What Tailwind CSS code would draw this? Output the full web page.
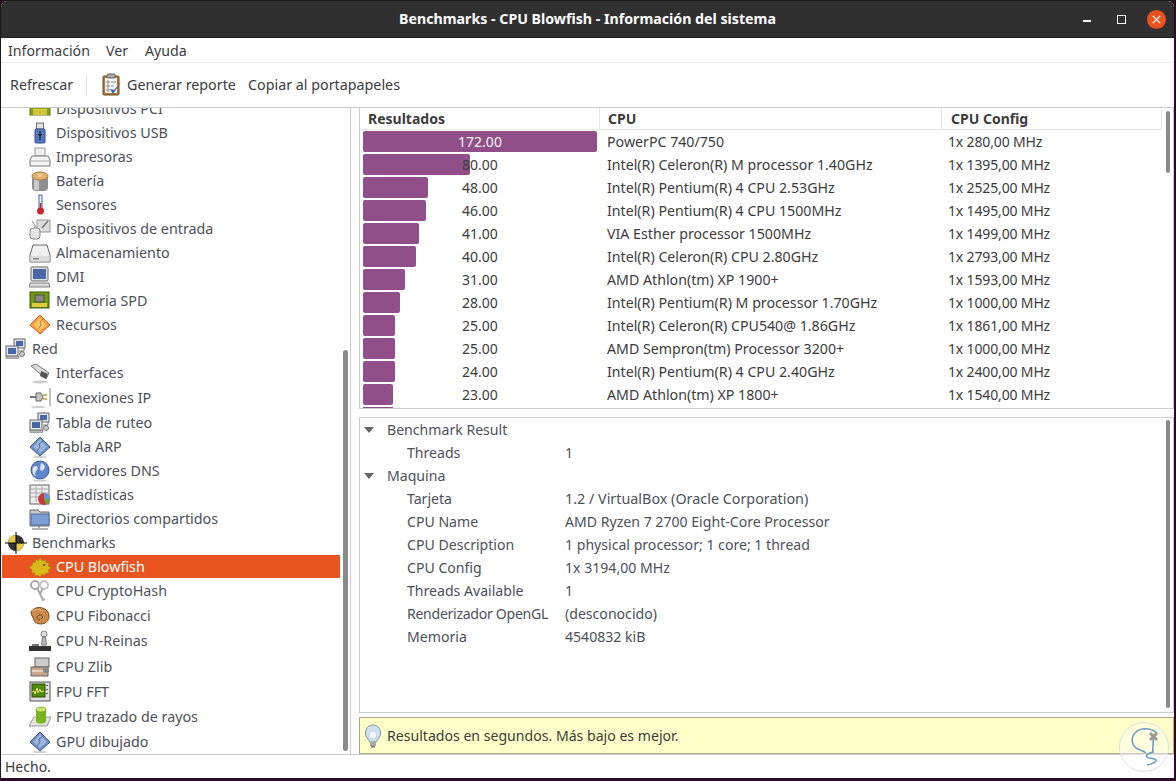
<!DOCTYPE html>
<html lang="es"><head><meta charset="utf-8"><title>Benchmarks</title>
<script src="https://cdn.jsdelivr.net/npm/@tailwindcss/browser@4"></script></head>
<body class="m-0 bg-[#2c0a26]">
<svg width="0" height="0" class="absolute">
<defs>
<symbol id="net" viewBox="0 0 22 22"><rect x="9" y="1" width="11" height="9" fill="#dfe3e8" stroke="#666"/><rect x="11" y="3" width="7" height="5" fill="#4a68a8"/><rect x="1" y="8" width="12" height="10" fill="#e3e6ea" stroke="#666"/><rect x="3" y="10" width="8" height="6" fill="#4a68a8"/><rect x="1" y="18.5" width="13" height="2" fill="#bbb" stroke="#777" stroke-width=".6"/><circle cx="17" cy="16" r="2.500" fill="#ccc" stroke="#777"/><path d="M14 13h5v-3" fill="none" stroke="#777"/></symbol>
<symbol id="dia" viewBox="0 0 22 22"><path d="M11 1l10 10-10 9L1 11z" fill="#6f8fc4" stroke="#3d5a8c"/><path d="M11 3l7 8-7 6-7-6z" fill="#9bb4dc"/><path d="M8 15l3-4-1-3 4-3" fill="none" stroke="#3d5a8c" stroke-width=".8"/><ellipse cx="11" cy="21" rx="7" ry="1" fill="#ccc"/></symbol>
</defs>
</svg>
<div class="relative w-[1176px] h-[781px] overflow-hidden bg-[#2c0a26] font-['Noto_Sans',sans-serif] text-[14px]">
<div class="absolute left-0 top-0 bottom-0 w-[1px] bg-[#1a1a1a]"></div>
<div class="absolute left-0 right-0 top-0 h-[1px] bg-[#1a1a1a]"></div>
<div class="ml-[1px] mt-[1px] w-[1173px] h-[777px] flex flex-col bg-white overflow-hidden rounded-t-[6px]">

<!-- title bar -->
<div class="relative h-[37px] shrink-0 bg-[#303030] border-b border-[#1e1e1e] flex items-center justify-center text-white font-bold text-[14.2px]">
<span class="mb-[1px]">Benchmarks - CPU Blowfish - Información del sistema</span>
<div class="absolute right-[8px] top-0 h-[36px] flex items-center">
<div class="w-[8px] h-[2px] bg-white mt-[4px]"></div>
<div class="w-[9px] h-[9px] border border-white ml-[26px]"></div>
<div class="w-[19px] h-[19px] rounded-full bg-[#e95420] flex items-center justify-center ml-[21px]">
<svg width="9" height="9" viewBox="0 0 9 9"><path d="M.8.8l7.4 7.4M8.2.8L.8 8.2" stroke="#fff" stroke-width="1.2"/></svg></div>
</div>
</div>

<!-- menu -->
<div class="h-[25px] shrink-0 border-b border-[#ececec] flex items-center text-[#3c3c3c] text-[14.2px] pt-[1px]">
<span class="w-[105px] pl-[7px] shrink-0">Información</span><span class="w-[39px] shrink-0">Ver</span><span>Ayuda</span>
</div>

<!-- toolbar -->
<div class="h-[44px] shrink-0 flex items-center text-[#3c3c3c] text-[14.3px]">
<span class="w-[85px] pl-[9px] shrink-0">Refrescar</span>
<div class="w-[1px] h-[21px] bg-[#e2e2e2] shrink-0"></div>
<svg class="ml-[14px] shrink-0" width="22" height="24" viewBox="0 0 22 24"><rect x="2" y="3" width="16" height="19" rx="1" fill="#b5793f" stroke="#6e4a22"/><rect x="4" y="5" width="12" height="15" fill="#f2f2f0"/><rect x="6" y="1" width="8" height="4" rx="1" fill="#aaa" stroke="#666"/><path d="M6 8h2v2H6zM6 12h2v2H6zM6 16h2v2H6z" fill="none" stroke="#777" stroke-width=".7"/><path d="M10 9h5M10 13h3" stroke="#999"/><path d="M9 16l3 5 8-12-7 8z" fill="#3a5fa5"/></svg>
<span class="ml-[4px] w-[121px] shrink-0">Generar reporte</span>
<span>Copiar al portapapeles</span>
</div>

<!-- main -->
<div class="h-[647px] shrink-0 flex border-t border-[#cdcdcd]">
<!-- sidebar -->
<div class="relative w-[350px] shrink-0 border-r border-[#cdcdcd] overflow-hidden text-[#4d5158] text-[14.3px]">
<div class="-mt-[11px]">
<div class="h-[24px] flex items-center pl-[28px]"><svg class="w-[22px] h-[22px] shrink-0" viewBox="0 0 22 22"><rect x="1" y="6" width="20" height="11" fill="#7fa51e" stroke="#56740e"/><rect x="4" y="11" width="14" height="6" fill="#e6d040"/><path d="M5 12v5M8 12v5M11 12v5M14 12v5M17 12v5" stroke="#9a8a1a" stroke-width=".6"/></svg><span class="ml-[5px]">Dispositivos PCI</span></div>

<div class="h-[24px] flex items-center pl-[28px]"><svg class="w-[22px] h-[22px] shrink-0" viewBox="0 0 22 22"><rect x="7.500" y="1" width="7" height="6" fill="#e2e2e2" stroke="#777"/><rect x="6" y="7" width="10" height="14" rx="1" fill="#5578c0" stroke="#34518c"/><path d="M11 9v9M9 12l2 2 2-2" stroke="#111" fill="none"/></svg><span class="ml-[5px]">Dispositivos USB</span></div>

<div class="h-[24px] flex items-center pl-[28px]"><svg class="w-[22px] h-[22px] shrink-0" viewBox="0 0 22 22"><rect x="6" y="2" width="10" height="8" fill="#eee" stroke="#999"/><path d="M3 10h16l2 4v6H1v-6z" fill="#f4f4f4" stroke="#777"/><path d="M2 15h18" stroke="#aaa"/></svg><span class="ml-[5px]">Impresoras</span></div>

<div class="h-[24px] flex items-center pl-[28px]"><svg class="w-[22px] h-[22px] shrink-0" viewBox="0 0 22 22"><rect x="3" y="5" width="16" height="16" rx="4" fill="#8f8f8f"/><rect x="5" y="8" width="5" height="12" fill="#c9c9c9"/><ellipse cx="11" cy="6" rx="8" ry="4" fill="#e2b36e" stroke="#a87b3a"/><circle cx="11" cy="5" r="2" fill="#f0cf9a"/></svg><span class="ml-[5px]">Batería</span></div>

<div class="h-[24px] flex items-center pl-[28px]"><svg class="w-[22px] h-[22px] shrink-0" viewBox="0 0 22 22"><rect x="10" y="1" width="3" height="14" fill="#e8ecf4" stroke="#274a82" stroke-width=".8"/><rect x="10.800" y="9" width="1.500" height="7" fill="#c8242a"/><circle cx="11.500" cy="17" r="3.500" fill="#c8242a"/></svg><span class="ml-[5px]">Sensores</span></div>

<div class="h-[24px] flex items-center pl-[28px]"><svg class="w-[22px] h-[22px] shrink-0" viewBox="0 0 22 22"><rect x="8" y="2" width="13" height="12" fill="#ddd" stroke="#999"/><path d="M13 10l6-7" stroke="#777" stroke-width="1.500"/><rect x="1" y="10" width="10" height="11" rx="3" fill="#e6e6e6" stroke="#888"/><path d="M6 10V7L3 3" fill="none" stroke="#888"/></svg><span class="ml-[5px]">Dispositivos de entrada</span></div>

<div class="h-[24px] flex items-center pl-[28px]"><svg class="w-[22px] h-[22px] shrink-0" viewBox="0 0 22 22"><path d="M4 3h14l3 10v7H1v-7z" fill="#f0f0f0" stroke="#666"/><rect x="1.500" y="14" width="19" height="5.500" fill="#dcdcdc"/><rect x="4" y="16" width="6" height="1.500" fill="#888"/></svg><span class="ml-[5px]">Almacenamiento</span></div>

<div class="h-[24px] flex items-center pl-[28px]"><svg class="w-[22px] h-[22px] shrink-0" viewBox="0 0 22 22"><rect x="2" y="1" width="17" height="14" rx="1" fill="#dfe2e6" stroke="#666"/><rect x="4" y="3" width="13" height="10" fill="#4a68a8"/><path d="M1 17h19l1 4H0z" fill="#d8d8d8" stroke="#666" stroke-width=".8"/></svg><span class="ml-[5px]">DMI</span></div>

<div class="h-[24px] flex items-center pl-[28px]"><svg class="w-[22px] h-[22px] shrink-0" viewBox="0 0 22 22"><rect x="1" y="2" width="19" height="16" fill="#6f9a12" stroke="#3c5a08"/><rect x="6" y="5" width="9" height="7" fill="#888" stroke="#333" stroke-width=".7"/><rect x="3" y="13" width="15" height="4" fill="#e2cb3a"/></svg><span class="ml-[5px]">Memoria SPD</span></div>

<div class="h-[24px] flex items-center pl-[28px]"><svg class="w-[22px] h-[22px] shrink-0" viewBox="0 0 22 22"><path d="M11 1l10 10-10 9L1 11z" fill="#f4a53a" stroke="#d9541e"/><path d="M11 4l6 7-6 6-6-6z" fill="#f9c46c"/><path d="M9 15l3-4-1-3 3-3" fill="none" stroke="#c9601e" stroke-width=".8"/></svg><span class="ml-[5px]">Recursos</span></div>

<div class="h-[24px] flex items-center pl-[4px]"><svg class="w-[22px] h-[22px] shrink-0"><use href="#net"/></svg><span class="ml-[5px]">Red</span></div>

<div class="h-[25px] flex items-center pl-[28px] pb-[1px]"><svg class="w-[22px] h-[22px] shrink-0" viewBox="0 0 22 22"><path d="M2 4l5-2 13 9-3 6z" fill="#dcdcdc" stroke="#777"/><path d="M12 9l7 3-2 5-6-3z" fill="#555"/><ellipse cx="11" cy="20" rx="8" ry="1.500" fill="#ccc"/></svg><span class="ml-[5px]">Interfaces</span></div>

<div class="h-[25px] flex items-center pl-[28px] pb-[1px]"><svg class="w-[22px] h-[22px] shrink-0" viewBox="0 0 22 22"><path d="M21 1v18" stroke="#999" stroke-width="1.200"/><path d="M1 10h6" stroke="#777" stroke-width="2"/><path d="M7 6h5l2 4-2 4H7z" fill="#c4c4c4" stroke="#666"/><path d="M14 8h4M14 12h4" stroke="#c89a2a" stroke-width="1.500"/><ellipse cx="9" cy="20" rx="7" ry="1" fill="#ccc"/></svg><span class="ml-[5px]">Conexiones IP</span></div>

<div class="h-[24px] flex items-center pl-[28px]"><svg class="w-[22px] h-[22px] shrink-0"><use href="#net"/></svg><span class="ml-[5px]">Tabla de ruteo</span></div>

<div class="h-[24px] flex items-center pl-[28px]"><svg class="w-[22px] h-[22px] shrink-0"><use href="#dia"/></svg><span class="ml-[5px]">Tabla ARP</span></div>

<div class="h-[24px] flex items-center pl-[28px]"><svg class="w-[22px] h-[22px] shrink-0" viewBox="0 0 22 22"><circle cx="11" cy="10" r="9" fill="#5f86c8" stroke="#3d5a8c"/><path d="M4 7c4-3 6 1 4 3s-3 5 0 7c-3-1-6-5-4-10zM12 3c3 1 5 3 3 6s-3 2-4 0z" fill="#d9e4f5"/><ellipse cx="11" cy="20.500" rx="7" ry="1" fill="#ccc"/></svg><span class="ml-[5px]">Servidores DNS</span></div>

<div class="h-[24px] flex items-center pl-[28px]"><svg class="w-[22px] h-[22px] shrink-0" viewBox="0 0 22 22"><rect x="1" y="1" width="19" height="19" fill="#eee" stroke="#666"/><path d="M2 5h17M2 9h17M2 13h10M7 2v16M13 2v8" stroke="#aaa"/><circle cx="15" cy="15" r="6" fill="#c9383a"/><path d="M15 15V9a6 6 0 0 1 6 6z" fill="#5e9ad6"/><path d="M15 15h6a6 6 0 0 1-4 5.500z" fill="#6fa83a"/></svg><span class="ml-[5px]">Estadísticas</span></div>

<div class="h-[23px] flex items-center pl-[28px]"><svg class="w-[22px] h-[22px] shrink-0" viewBox="0 0 22 22"><path d="M1 2h8l2 2h9v14H1z" fill="#c9c9c9" stroke="#666"/><rect x="2" y="6" width="18" height="11" fill="#7d9fd4" stroke="#4f6f9f"/><path d="M10 18v2M3 21h16" stroke="#666"/></svg><span class="ml-[5px]">Directorios compartidos</span></div>

<div class="h-[25px] flex items-center pl-[4px]"><svg class="w-[22px] h-[22px] shrink-0" viewBox="0 0 22 22"><circle cx="11" cy="11" r="8" fill="#333"/><path d="M11 11V3a8 8 0 0 0-8 8zM11 11v8a8 8 0 0 0 8-8z" fill="#e5c84a"/><path d="M11 0v22M0 11h22" stroke="#000"/></svg><span class="ml-[5px]">Benchmarks</span></div>

<div class="h-[23px] w-[338px] ml-[1px] flex items-center pl-[27px] bg-[#e95420] text-white"><svg class="w-[22px] h-[22px] shrink-0" viewBox="0 0 22 22"><path d="M0 11l3-1 1-4 2 1 1-4 2 2 2-3 2 3 3-1 1 3 3 0-1 3 3 2-3 2 1 3-3 0-1 2-3-1-2 3-2-2-3 1 0-3-3 0 0-3z" fill="#d9b81a" stroke="#a9891a" stroke-width=".6"/><circle cx="15" cy="9" r="1" fill="#333"/></svg><span class="ml-[5px]">CPU Blowfish</span></div>

<div class="h-[25px] flex items-center pl-[28px]"><svg class="w-[22px] h-[22px] shrink-0" viewBox="0 0 22 22"><circle cx="6" cy="5" r="4" fill="none" stroke="#aaa" stroke-width="2"/><circle cx="15" cy="5" r="4" fill="none" stroke="#c4c4c4" stroke-width="2"/><path d="M8 8l6 12 2-1M14 8l-3 6" fill="none" stroke="#aaa" stroke-width="2"/></svg><span class="ml-[5px]">CPU CryptoHash</span></div>

<div class="h-[25px] flex items-center pl-[28px]"><svg class="w-[22px] h-[22px] shrink-0" viewBox="0 0 22 22"><path d="M2 7c3-6 13-6 17 0 3 6-1 12-7 12-3 0-6-1-7-4-1-3-3-5-3-8z" fill="#c98a4a" stroke="#7a4a1e"/><path d="M11 15c-3 0-4-4-1-5s5 3 2 4" fill="none" stroke="#6e3f16"/><path d="M3 6c4-2 8-2 11 0" fill="none" stroke="#e9b98a"/></svg><span class="ml-[5px]">CPU Fibonacci</span></div>

<div class="h-[26px] flex items-center pl-[28px]"><svg class="w-[22px] h-[22px] shrink-0" viewBox="0 0 22 22"><circle cx="15" cy="4" r="3" fill="#ddd" stroke="#888"/><path d="M13.500 7h3l1 8h-5z" fill="#bbb" stroke="#777"/><path d="M0 16h22v5H0z" fill="#333"/><path d="M3 14h7v2H3z" fill="#777"/></svg><span class="ml-[5px]">CPU N-Reinas</span></div>

<div class="h-[25px] flex items-center pl-[28px]"><svg class="w-[22px] h-[22px] shrink-0" viewBox="0 0 22 22"><rect x="6" y="2" width="14" height="9" fill="#ccc" stroke="#666"/><path d="M2 11h17v9H2z" fill="#c9a58a" stroke="#666"/><path d="M3 15h15" stroke="#fff"/><circle cx="17" cy="14" r="3" fill="#888"/></svg><span class="ml-[5px]">CPU Zlib</span></div>

<div class="h-[25px] flex items-center pl-[28px]"><svg class="w-[22px] h-[22px] shrink-0" viewBox="0 0 22 22"><rect x="1" y="1" width="20" height="19" fill="#e2e2e2" stroke="#555"/><rect x="3" y="3" width="13" height="13" fill="#4f8a10" stroke="#2c4f08"/><path d="M3 11l2-1 1 3 2-6 1 5 2-4 1 3 3-1" fill="none" stroke="#f0e26a"/><path d="M18 4v1M18 8v1M18 12v1" stroke="#555" stroke-width="2"/></svg><span class="ml-[5px]">FPU FFT</span></div>

<div class="h-[25px] flex items-center pl-[28px]"><svg class="w-[22px] h-[22px] shrink-0" viewBox="0 0 22 22"><path d="M5 11h17l-4 9H0z" fill="#e3e3dc" stroke="#999"/><rect x="7" y="3" width="10" height="12" fill="#79b51e"/><ellipse cx="12" cy="3.500" rx="5" ry="2.500" fill="#c6e36a" stroke="#5d8c12" stroke-width=".6"/><ellipse cx="12" cy="15" rx="5" ry="2.500" fill="#79b51e"/></svg><span class="ml-[5px]">FPU trazado de rayos</span></div>

<div class="h-[25px] flex items-center pl-[28px]"><svg class="w-[22px] h-[22px] shrink-0"><use href="#dia"/></svg><span class="ml-[5px]">GPU dibujado</span></div>
</div>
<div class="absolute left-[342px] top-[242px] w-[5px] h-[401px] rounded-full bg-[#8a8a8a]"></div>
</div>

<!-- right -->
<div class="w-[823px] shrink-0 flex flex-col pl-[8px]">
<!-- results pane -->
<div class="relative h-[301px] shrink-0 border-x border-b border-[#cdcdcd] overflow-hidden text-[#3c3c3c] text-[14.2px]">
<div class="h-[22px] w-[802px] grid grid-cols-[240px_342px_220px] border-b border-[#e4e4e4] font-bold leading-[21px] text-[14px]">
<div class="pl-[8px] border-r border-[#e4e4e4]">Resultados</div><div class="pl-[8px] border-r border-[#e4e4e4]">CPU</div><div class="pl-[9px] border-r border-[#e4e4e4]">CPU Config</div></div>

<div class="h-[23px] grid grid-cols-[240px_342px_220px] items-center"><div class="relative h-[23px] flex items-center justify-center text-[14px]"><div class="absolute left-[3px] top-[1px] h-[21px] rounded-[2px] bg-[#914f89] w-[234px]"></div><span class="relative text-[#f4f4f4]">172.00</span></div><div class="pl-[7px]">PowerPC 740/750</div><div class="pl-[6px] text-[14px] tracking-[-0.15px]">1x 280,00 MHz</div></div>
<div class="h-[23px] grid grid-cols-[240px_342px_220px] items-center"><div class="relative h-[23px] flex items-center justify-center text-[14px]"><div class="absolute left-[3px] top-[1px] h-[21px] rounded-[2px] bg-[#914f89] w-[107px]"></div><span class="relative">80.00</span></div><div class="pl-[7px]">Intel(R) Celeron(R) M processor 1.40GHz</div><div class="pl-[6px] text-[14px] tracking-[-0.15px]">1x 1395,00 MHz</div></div>
<div class="h-[23px] grid grid-cols-[240px_342px_220px] items-center"><div class="relative h-[23px] flex items-center justify-center text-[14px]"><div class="absolute left-[3px] top-[1px] h-[21px] rounded-[2px] bg-[#914f89] w-[65px]"></div><span class="relative">48.00</span></div><div class="pl-[7px]">Intel(R) Pentium(R) 4 CPU 2.53GHz</div><div class="pl-[6px] text-[14px] tracking-[-0.15px]">1x 2525,00 MHz</div></div>
<div class="h-[23px] grid grid-cols-[240px_342px_220px] items-center"><div class="relative h-[23px] flex items-center justify-center text-[14px]"><div class="absolute left-[3px] top-[1px] h-[21px] rounded-[2px] bg-[#914f89] w-[63px]"></div><span class="relative">46.00</span></div><div class="pl-[7px]">Intel(R) Pentium(R) 4 CPU 1500MHz</div><div class="pl-[6px] text-[14px] tracking-[-0.15px]">1x 1495,00 MHz</div></div>
<div class="h-[23px] grid grid-cols-[240px_342px_220px] items-center"><div class="relative h-[23px] flex items-center justify-center text-[14px]"><div class="absolute left-[3px] top-[1px] h-[21px] rounded-[2px] bg-[#914f89] w-[56px]"></div><span class="relative">41.00</span></div><div class="pl-[7px]">VIA Esther processor 1500MHz</div><div class="pl-[6px] text-[14px] tracking-[-0.15px]">1x 1499,00 MHz</div></div>
<div class="h-[23px] grid grid-cols-[240px_342px_220px] items-center"><div class="relative h-[23px] flex items-center justify-center text-[14px]"><div class="absolute left-[3px] top-[1px] h-[21px] rounded-[2px] bg-[#914f89] w-[53px]"></div><span class="relative">40.00</span></div><div class="pl-[7px]">Intel(R) Celeron(R) CPU 2.80GHz</div><div class="pl-[6px] text-[14px] tracking-[-0.15px]">1x 2793,00 MHz</div></div>
<div class="h-[23px] grid grid-cols-[240px_342px_220px] items-center"><div class="relative h-[23px] flex items-center justify-center text-[14px]"><div class="absolute left-[3px] top-[1px] h-[21px] rounded-[2px] bg-[#914f89] w-[42px]"></div><span class="relative">31.00</span></div><div class="pl-[7px]">AMD Athlon(tm) XP 1900+</div><div class="pl-[6px] text-[14px] tracking-[-0.15px]">1x 1593,00 MHz</div></div>
<div class="h-[23px] grid grid-cols-[240px_342px_220px] items-center"><div class="relative h-[23px] flex items-center justify-center text-[14px]"><div class="absolute left-[3px] top-[1px] h-[21px] rounded-[2px] bg-[#914f89] w-[37px]"></div><span class="relative">28.00</span></div><div class="pl-[7px]">Intel(R) Pentium(R) M processor 1.70GHz</div><div class="pl-[6px] text-[14px] tracking-[-0.15px]">1x 1000,00 MHz</div></div>
<div class="h-[23px] grid grid-cols-[240px_342px_220px] items-center"><div class="relative h-[23px] flex items-center justify-center text-[14px]"><div class="absolute left-[3px] top-[1px] h-[21px] rounded-[2px] bg-[#914f89] w-[32px]"></div><span class="relative">25.00</span></div><div class="pl-[7px]">Intel(R) Celeron(R) CPU540@ 1.86GHz</div><div class="pl-[6px] text-[14px] tracking-[-0.15px]">1x 1861,00 MHz</div></div>
<div class="h-[23px] grid grid-cols-[240px_342px_220px] items-center"><div class="relative h-[23px] flex items-center justify-center text-[14px]"><div class="absolute left-[3px] top-[1px] h-[21px] rounded-[2px] bg-[#914f89] w-[32px]"></div><span class="relative">25.00</span></div><div class="pl-[7px]">AMD Sempron(tm) Processor 3200+</div><div class="pl-[6px] text-[14px] tracking-[-0.15px]">1x 1000,00 MHz</div></div>
<div class="h-[23px] grid grid-cols-[240px_342px_220px] items-center"><div class="relative h-[23px] flex items-center justify-center text-[14px]"><div class="absolute left-[3px] top-[1px] h-[21px] rounded-[2px] bg-[#914f89] w-[32px]"></div><span class="relative">24.00</span></div><div class="pl-[7px]">Intel(R) Pentium(R) 4 CPU 2.40GHz</div><div class="pl-[6px] text-[14px] tracking-[-0.15px]">1x 2400,00 MHz</div></div>
<div class="h-[23px] grid grid-cols-[240px_342px_220px] items-center"><div class="relative h-[23px] flex items-center justify-center text-[14px]"><div class="absolute left-[3px] top-[1px] h-[21px] rounded-[2px] bg-[#914f89] w-[30px]"></div><span class="relative">23.00</span></div><div class="pl-[7px]">AMD Athlon(tm) XP 1800+</div><div class="pl-[6px] text-[14px] tracking-[-0.15px]">1x 1540,00 MHz</div></div>
<div class="h-[4px] relative"><div class="absolute left-[3px] top-[1px] h-[21px] w-[30px] bg-[#914f89]"></div></div>
<div class="absolute left-[806px] top-[3px] w-[4px] h-[62px] rounded-full bg-[#8a8a8a]"></div>
</div>

<div class="h-[8px] shrink-0"></div>

<!-- details -->
<div class="relative h-[296px] shrink-0 border border-[#cdcdcd] text-[#4d5158] text-[14.1px]">
<div class="h-[23px] flex items-center"><svg class="ml-[4px] w-[10px] h-[6px]" viewBox="0 0 10 6"><path d="M0 0h10L5 6z" fill="#666"/></svg><span class="ml-[13px]">Benchmark Result</span></div>
<div class="h-[23px] flex items-center pl-[47px]"><span class="w-[158px] shrink-0">Threads</span><span>1</span></div>
<div class="h-[23px] flex items-center"><svg class="ml-[4px] w-[10px] h-[6px]" viewBox="0 0 10 6"><path d="M0 0h10L5 6z" fill="#666"/></svg><span class="ml-[13px]">Maquina</span></div>
<div class="h-[23px] flex items-center pl-[47px]"><span class="w-[158px] shrink-0">Tarjeta</span><span class="text-[14.35px]">1.2 / VirtualBox (Oracle Corporation)</span></div>
<div class="h-[23px] flex items-center pl-[47px]"><span class="w-[158px] shrink-0">CPU Name</span><span>AMD Ryzen 7 2700 Eight-Core Processor</span></div>
<div class="h-[23px] flex items-center pl-[47px]"><span class="w-[158px] shrink-0">CPU Description</span><span>1 physical processor; 1 core; 1 thread</span></div>
<div class="h-[23px] flex items-center pl-[47px]"><span class="w-[158px] shrink-0">CPU Config</span><span>1x 3194,00 MHz</span></div>
<div class="h-[23px] flex items-center pl-[47px]"><span class="w-[158px] shrink-0">Threads Available</span><span>1</span></div>
<div class="h-[23px] flex items-center pl-[47px]"><span class="w-[158px] shrink-0 tracking-[-0.3px]">Renderizador OpenGL</span><span>(desconocido)</span></div>
<div class="h-[23px] flex items-center pl-[47px]"><span class="w-[158px] shrink-0">Memoria</span><span>4540832 kiB</span></div>
<div class="absolute left-[806px] top-[2px] w-[4px] h-[288px] rounded-full bg-[#8a8a8a]"></div>
</div>

<div class="h-[4px] shrink-0"></div>

<!-- info bar -->
<div class="h-[37px] shrink-0 border border-[#b5a98f] bg-[#ffffc9] flex items-center text-[#3c3c3c] text-[14.1px]">
<svg class="ml-[3px] w-[20px] h-[24px] shrink-0" viewBox="0 0 20 24"><path d="M10 1a8 8 0 0 0-5 14c1 1 1 2 1.500 3h7c.5-1 .5-2 1.500-3a8 8 0 0 0-5-14z" fill="#cfdff2" stroke="#8a94a0"/><circle cx="10" cy="11" r="3" fill="#fafafa"/><rect x="7" y="18" width="6" height="4" fill="#a8a8a0"/><rect x="8" y="22" width="4" height="1.500" fill="#777"/></svg>
<span class="ml-[4px]">Resultados en segundos. Más bajo es mejor.</span>
</div>
</div>
</div>

<!-- status -->
<div class="flex-1 border-t border-[#cdcdcd] flex items-center pl-[4px] text-[#3c3c3c]">Hecho.</div>
</div>

<!-- watermark -->
<div class="absolute left-[1119px] top-[722px] w-[50px] h-[50px] rounded-full bg-white/40 border border-[#dddddd]">
<svg class="absolute left-0 top-0" width="50" height="50" viewBox="0 0 50 50"><path d="M37 10c-5-5-16-6-21-1-5 4-5 12 0 16 3 2 8 3 10 5M33 15c1 4-1 10 0 14-4 1-8 3-6 5s8 1 9 3-4 4-9 5" fill="none" stroke="#6e9bc9" stroke-width="1.600"/><path d="M30 10l7 7M37 10l-7 7" stroke="#999" stroke-width="3"/></svg>
</div>
</div>
</body></html>
